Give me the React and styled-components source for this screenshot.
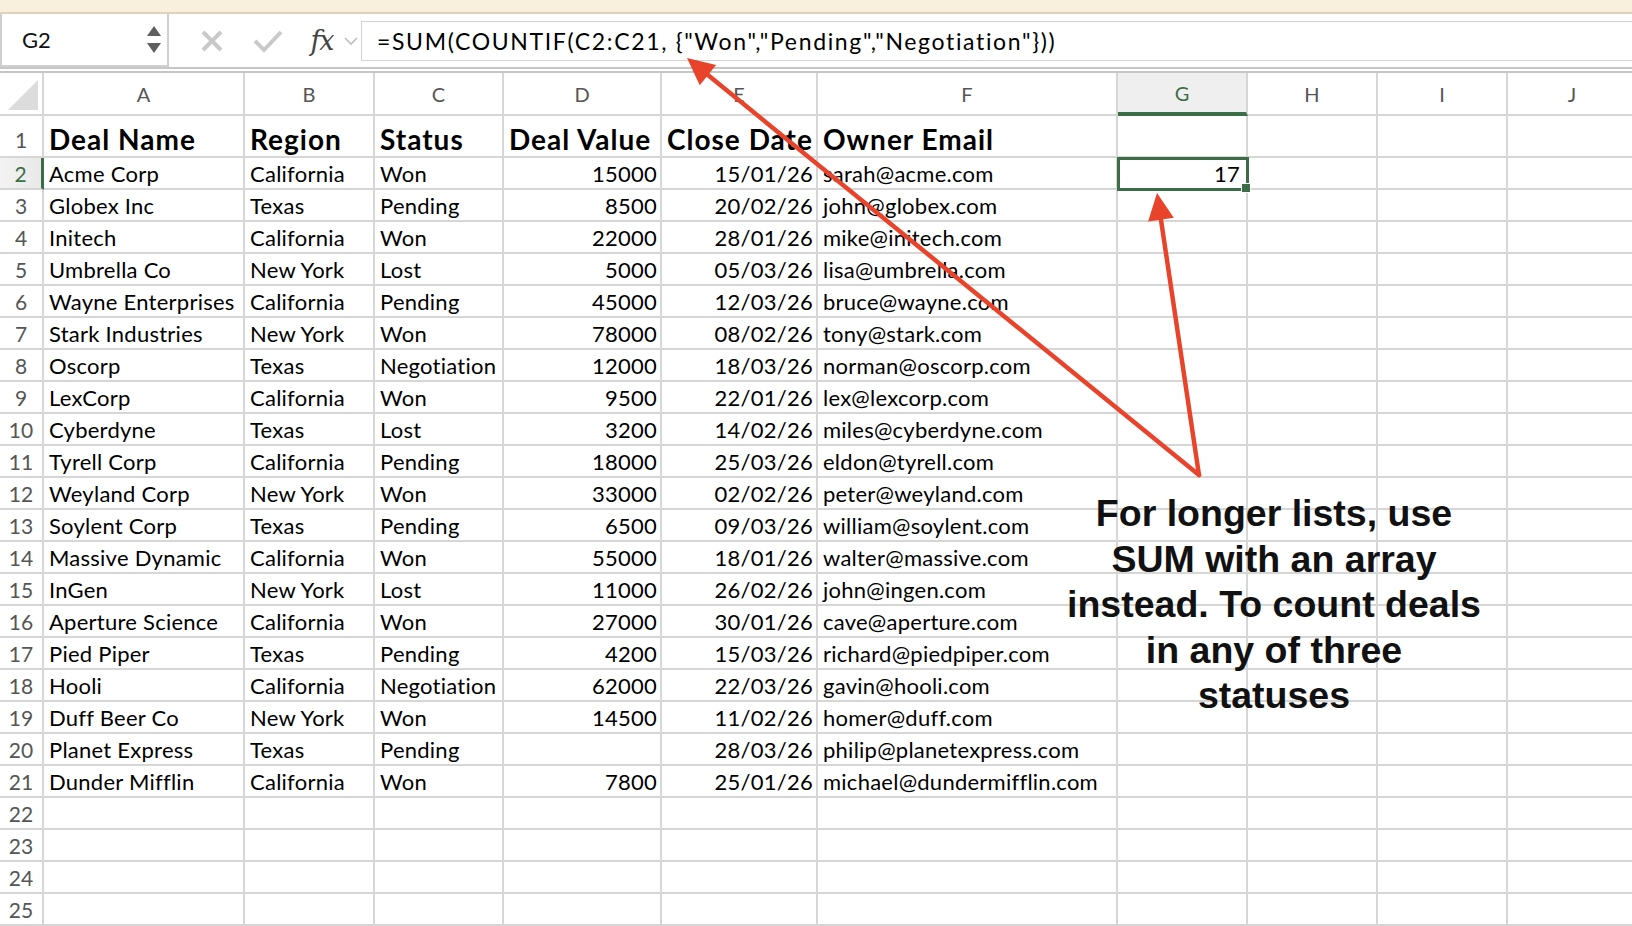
import React from 'react';
import styled, { createGlobalStyle } from 'styled-components';

const GlobalStyle = createGlobalStyle`
  html, body {
    margin: 0;
    padding: 0;
    background: #ffffff;
    overflow: hidden;
  }
  body {
    font-family: Lato, "Open Sans", sans-serif;
  }
`;

const COLS = [
  { key: 'A', width: 201 },
  { key: 'B', width: 130 },
  { key: 'C', width: 129 },
  { key: 'D', width: 158, align: 'right' },
  { key: 'E', width: 156, align: 'right' },
  { key: 'F', width: 300 },
  { key: 'G', width: 130, align: 'right' },
  { key: 'H', width: 130 },
  { key: 'I', width: 130 },
  { key: 'J', width: 130 },
];

const HEADERS = ['Deal Name', 'Region', 'Status', 'Deal Value', 'Close Date', 'Owner Email'];

const DEALS = [
  ['Acme Corp', 'California', 'Won', '15000', '15/01/26', 'sarah@acme.com'],
  ['Globex Inc', 'Texas', 'Pending', '8500', '20/02/26', 'john@globex.com'],
  ['Initech', 'California', 'Won', '22000', '28/01/26', 'mike@initech.com'],
  ['Umbrella Co', 'New York', 'Lost', '5000', '05/03/26', 'lisa@umbrella.com'],
  ['Wayne Enterprises', 'California', 'Pending', '45000', '12/03/26', 'bruce@wayne.com'],
  ['Stark Industries', 'New York', 'Won', '78000', '08/02/26', 'tony@stark.com'],
  ['Oscorp', 'Texas', 'Negotiation', '12000', '18/03/26', 'norman@oscorp.com'],
  ['LexCorp', 'California', 'Won', '9500', '22/01/26', 'lex@lexcorp.com'],
  ['Cyberdyne', 'Texas', 'Lost', '3200', '14/02/26', 'miles@cyberdyne.com'],
  ['Tyrell Corp', 'California', 'Pending', '18000', '25/03/26', 'eldon@tyrell.com'],
  ['Weyland Corp', 'New York', 'Won', '33000', '02/02/26', 'peter@weyland.com'],
  ['Soylent Corp', 'Texas', 'Pending', '6500', '09/03/26', 'william@soylent.com'],
  ['Massive Dynamic', 'California', 'Won', '55000', '18/01/26', 'walter@massive.com'],
  ['InGen', 'New York', 'Lost', '11000', '26/02/26', 'john@ingen.com'],
  ['Aperture Science', 'California', 'Won', '27000', '30/01/26', 'cave@aperture.com'],
  ['Pied Piper', 'Texas', 'Pending', '4200', '15/03/26', 'richard@piedpiper.com'],
  ['Hooli', 'California', 'Negotiation', '62000', '22/03/26', 'gavin@hooli.com'],
  ['Duff Beer Co', 'New York', 'Won', '14500', '11/02/26', 'homer@duff.com'],
  ['Planet Express', 'Texas', 'Pending', '', '28/03/26', 'philip@planetexpress.com'],
  ['Dunder Mifflin', 'California', 'Won', '7800', '25/01/26', 'michael@dundermifflin.com'],
];

const GREEN = '#3b6e47';
const GRID = '#d6d6d6';

const Page = styled.div`
  position: relative;
  width: 1632px;
  height: 926px;
  overflow: hidden;
  background: #fff;
`;

const TopBand = styled.div`
  height: 12px;
  background: #f8f0dc;
  border-bottom: 2px solid #ddd3bb;
`;

const FormulaBar = styled.div`
  display: flex;
  align-items: center;
  height: 53px;
  background: #fff;
  border-bottom: 2px solid #c6c6c6;
`;

const NameBox = styled.div`
  box-sizing: border-box;
  width: 169px;
  height: 53px;
  display: flex;
  align-items: center;
  justify-content: space-between;
  padding: 0 6px 0 20px;
  border: 2px solid #cfcfcf;
  border-top: none;
  font-size: 22px;
  color: #111;
`;

const Spinner = styled.div`
  display: flex;
  flex-direction: column;
  gap: 7px;
`;

const Tri = styled.div`
  width: 0;
  height: 0;
  border-left: 7px solid transparent;
  border-right: 7px solid transparent;
  ${(p) => (p.$down ? 'border-top: 10px solid #5e5e5e;' : 'border-bottom: 10px solid #5e5e5e;')}
`;

const Tools = styled.div`
  display: flex;
  align-items: center;
  width: 192px;
  padding-left: 22px;
  box-sizing: border-box;
`;

const ToolIcon = styled.span`
  display: flex;
  align-items: center;
  justify-content: center;
  width: ${(p) => p.$w}px;
`;

const Fx = styled.span`
  font-family: "DejaVu Serif", "Liberation Serif", serif;
  font-style: italic;
  font-size: 27px;
  color: #444;
  letter-spacing: -1px;
`;

const FormulaInput = styled.div`
  flex: 1;
  height: 40px;
  margin-top: 1px;
  box-sizing: border-box;
  display: flex;
  align-items: center;
  padding-left: 15px;
  border: 1px solid #d2d2d2;
  border-right: none;
  font-size: 23px;
  letter-spacing: 1.65px;
  color: #000;
  white-space: nowrap;
`;

const Divider = styled.div`
  height: 2px;
  background: #fff;
  border-bottom: 2px solid #c6c6c6;
`;

const Sheet = styled.div`
  display: grid;
  grid-template-columns: 44px ${COLS.map((c) => c.width + 'px').join(' ')};
  grid-template-rows: 43px 42px;
  grid-auto-rows: 32px;
`;

const Cell = styled.div`
  box-sizing: border-box;
  border-right: 2px solid ${GRID};
  border-bottom: 2px solid ${GRID};
  padding: 0 ${(p) => (p.$align === 'right' ? '3px' : '5px')} 0 5px;
  display: flex;
  align-items: center;
  justify-content: ${(p) => (p.$align === 'right' ? 'flex-end' : 'flex-start')};
  font-size: ${(p) => (p.$bold ? '28px' : '22px')};
  font-weight: ${(p) => (p.$bold ? 700 : 400)};
  letter-spacing: ${(p) => (p.$bold ? '1px' : '0.25px')};
  color: #000;
  white-space: nowrap;
  line-height: 1;
  padding-top: ${(p) => (p.$bold ? '5px' : '1px')};
`;

const ColHead = styled.div`
  box-sizing: border-box;
  border-right: 2px solid ${GRID};
  border-bottom: ${(p) => (p.$active ? `4px solid ${GREEN}` : `2px solid ${GRID}`)};
  background: ${(p) => (p.$active ? '#efefef' : '#fff')};
  color: ${(p) => (p.$active ? GREEN : '#555')};
  display: flex;
  align-items: center;
  justify-content: center;
  font-size: 20px;
`;

const Corner = styled.div`
  box-sizing: border-box;
  border-right: 2px solid ${GRID};
  border-bottom: 2px solid ${GRID};
  position: relative;
  &::after {
    content: '';
    position: absolute;
    right: 4px;
    bottom: 4px;
    width: 0;
    height: 0;
    border-left: 30px solid transparent;
    border-bottom: 30px solid #dcdcdc;
  }
`;

const RowHead = styled.div`
  box-sizing: border-box;
  border-right: ${(p) => (p.$active ? `3px solid ${GREEN}` : `2px solid ${GRID}`)};
  border-bottom: 2px solid ${GRID};
  background: ${(p) => (p.$active ? 'linear-gradient(90deg, #f3f3f3, #e9e9e9)' : '#fff')};
  color: ${(p) => (p.$active ? GREEN : '#555')};
  display: flex;
  align-items: center;
  justify-content: center;
  font-size: 21px;
  padding-top: ${(p) => (p.$tall ? '6px' : '1px')};
`;

const Selected = styled(Cell)`
  position: relative;
  outline: 3px solid ${GREEN};
  outline-offset: -2px;
  padding-right: 6px;
  &::after {
    content: '';
    position: absolute;
    right: -5px;
    bottom: -5px;
    width: 8px;
    height: 8px;
    background: ${GREEN};
    border: 1px solid #fff;
  }
`;

const Overlay = styled.svg`
  position: absolute;
  left: 0;
  top: 0;
  pointer-events: none;
`;

const Note = styled.div`
  position: absolute;
  left: 1034px;
  top: 491px;
  width: 480px;
  text-align: center;
  font-family: "Liberation Sans", Arial, sans-serif;
  font-weight: 700;
  font-size: 37.5px;
  line-height: 45.5px;
  color: #111;
`;

function Arrow({ x1, y1, x2, y2 }) {
  const dx = x2 - x1;
  const dy = y2 - y1;
  const len = Math.hypot(dx, dy);
  const ux = dx / len;
  const uy = dy / len;
  const headLen = 27;
  const half = 13;
  const bx = x2 - ux * headLen;
  const by = y2 - uy * headLen;
  const p1 = `${bx - uy * half},${by + ux * half}`;
  const p2 = `${bx + uy * half},${by - ux * half}`;
  return (
    <g>
      <line x1={x1} y1={y1} x2={bx + ux * 4} y2={by + uy * 4} stroke="#e8432b" strokeWidth="4.5" strokeLinecap="round" />
      <polygon points={`${x2},${y2} ${p1} ${p2}`} fill="#e8432b" />
    </g>
  );
}

export default function App() {
  const rows = [];
  rows.push(
    <React.Fragment key="r1">
      <RowHead $tall>1</RowHead>
      {COLS.map((c, i) => (
        <Cell key={c.key} $bold>
          {HEADERS[i] || ''}
        </Cell>
      ))}
    </React.Fragment>
  );
  for (let r = 2; r <= 25; r++) {
    const deal = DEALS[r - 2] || [];
    rows.push(
      <React.Fragment key={'r' + r}>
        <RowHead $active={r === 2}>{r}</RowHead>
        {COLS.map((c, i) => {
          if (r === 2 && c.key === 'G') {
            return (
              <Selected key={c.key} $align="right">
                17
              </Selected>
            );
          }
          return (
            <Cell key={c.key} $align={c.align}>
              {deal[i] || ''}
            </Cell>
          );
        })}
      </React.Fragment>
    );
  }

  return (
    <Page>
      <GlobalStyle />
      <TopBand />
      <FormulaBar>
        <NameBox>
          <span>G2</span>
          <Spinner>
            <Tri />
            <Tri $down />
          </Spinner>
        </NameBox>
        <Tools>
          <ToolIcon $w={42}>
            <svg width="24" height="24" viewBox="0 0 24 24">
              <path d="M3 3 L21 21 M21 3 L3 21" stroke="#c9c9c9" strokeWidth="4" />
            </svg>
          </ToolIcon>
          <ToolIcon $w={70}>
            <svg width="30" height="24" viewBox="0 0 30 24">
              <path d="M2 12 L11 21 L28 3" stroke="#c9c9c9" strokeWidth="4" fill="none" />
            </svg>
          </ToolIcon>
          <ToolIcon $w={38}>
            <Fx>fx</Fx>
          </ToolIcon>
          <ToolIcon $w={20}>
            <svg width="14" height="10" viewBox="0 0 14 10">
              <path d="M1 2 L7 8 L13 2" stroke="#bdbdbd" strokeWidth="1.6" fill="none" />
            </svg>
          </ToolIcon>
        </Tools>
        <FormulaInput>=SUM(COUNTIF(C2:C21, {"{"}"Won","Pending","Negotiation"{"}"}))</FormulaInput>
      </FormulaBar>
      <Divider />
      <Sheet>
        <Corner />
        {COLS.map((c) => (
          <ColHead key={c.key} $active={c.key === 'G'}>
            {c.key}
          </ColHead>
        ))}
        {rows}
      </Sheet>
      <Note>
        For longer lists, use
        <br />
        SUM with an array
        <br />
        instead. To count deals
        <br />
        in any of three
        <br />
        statuses
      </Note>
      <Overlay width="1632" height="926" viewBox="0 0 1632 926">
        <Arrow x1={1199} y1={475} x2={687} y2={58} />
        <Arrow x1={1199} y1={475} x2={1157} y2={193} />
      </Overlay>
    </Page>
  );
}
